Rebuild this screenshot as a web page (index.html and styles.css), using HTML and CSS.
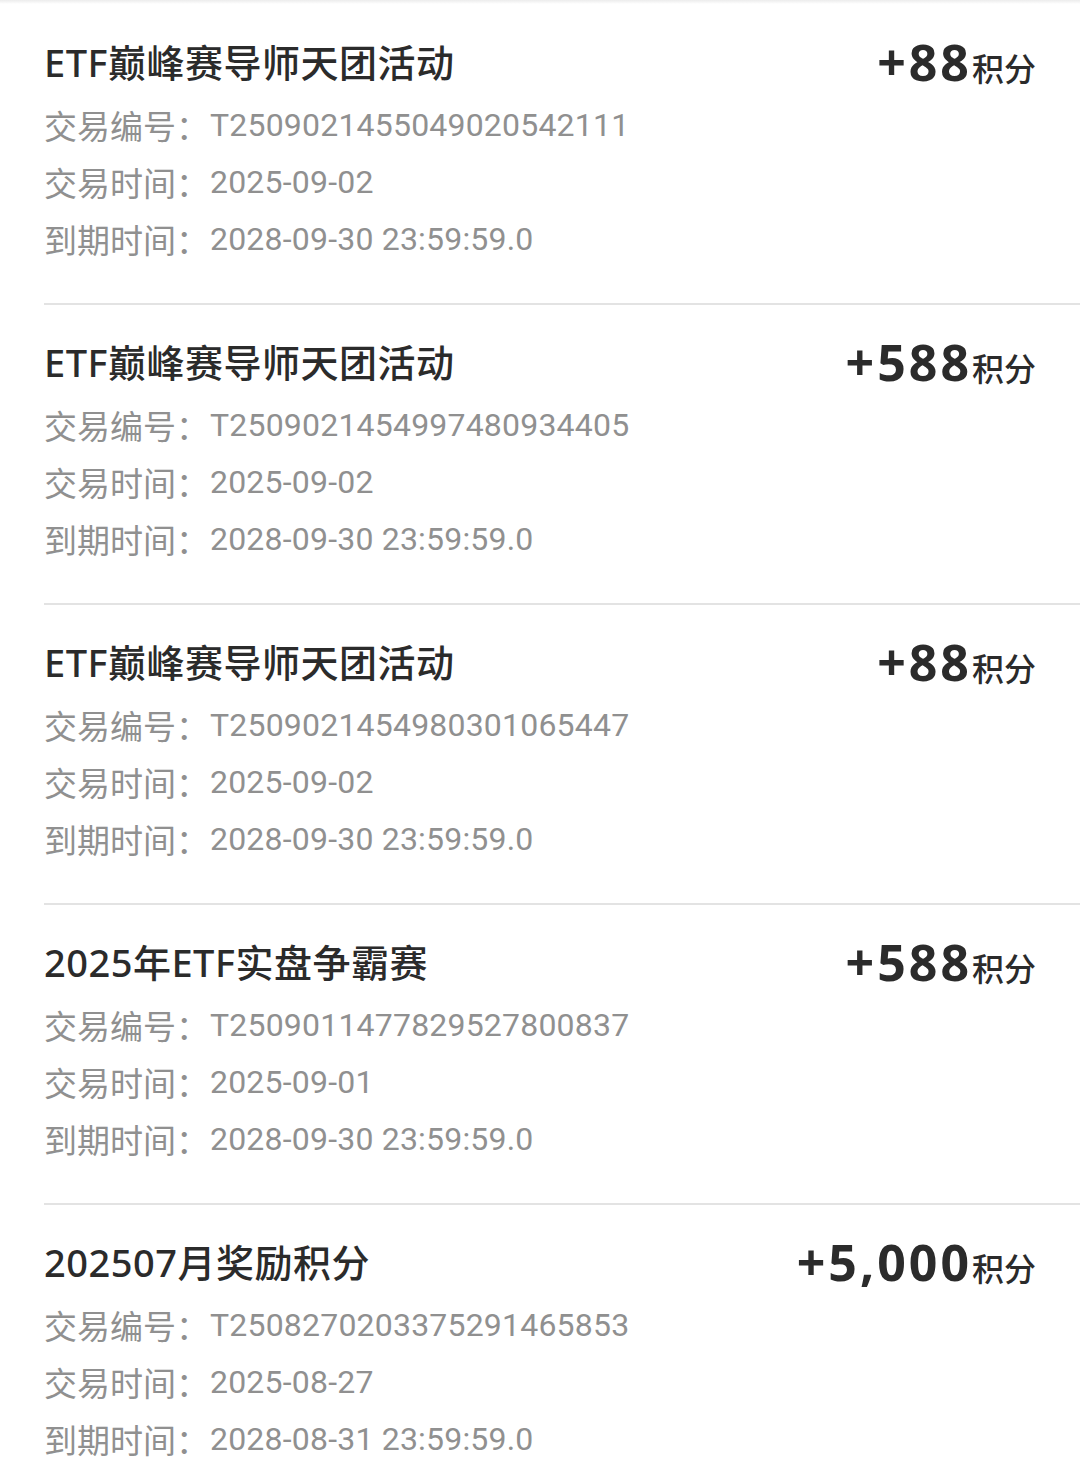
FILE: index.html
```html
<!DOCTYPE html>
<html lang="zh-CN">
<head>
<meta charset="UTF-8">
<title>积分明细</title>
<link rel="stylesheet" href="styles.css">
</head>
<body>
  <!-- points records -->
  <div class="record-list">

    <div class="record">
      <div class="record-head">
        <div class="record-title">ETF巅峰赛导师天团活动</div>
        <div class="record-amount">+88<span class="unit">积分</span></div>
      </div>
      <div class="record-line"><span class="label">交易编号：</span><span class="value">T2509021455049020542111</span></div>
      <div class="record-line"><span class="label">交易时间：</span><span class="value">2025-09-02</span></div>
      <div class="record-line"><span class="label">到期时间：</span><span class="value">2028-09-30 23:59:59.0</span></div>
    </div>

    <div class="record">
      <div class="record-head">
        <div class="record-title">ETF巅峰赛导师天团活动</div>
        <div class="record-amount">+588<span class="unit">积分</span></div>
      </div>
      <div class="record-line"><span class="label">交易编号：</span><span class="value">T2509021454997480934405</span></div>
      <div class="record-line"><span class="label">交易时间：</span><span class="value">2025-09-02</span></div>
      <div class="record-line"><span class="label">到期时间：</span><span class="value">2028-09-30 23:59:59.0</span></div>
    </div>

    <div class="record">
      <div class="record-head">
        <div class="record-title">ETF巅峰赛导师天团活动</div>
        <div class="record-amount">+88<span class="unit">积分</span></div>
      </div>
      <div class="record-line"><span class="label">交易编号：</span><span class="value">T2509021454980301065447</span></div>
      <div class="record-line"><span class="label">交易时间：</span><span class="value">2025-09-02</span></div>
      <div class="record-line"><span class="label">到期时间：</span><span class="value">2028-09-30 23:59:59.0</span></div>
    </div>

    <div class="record">
      <div class="record-head">
        <div class="record-title">2025年ETF实盘争霸赛</div>
        <div class="record-amount">+588<span class="unit">积分</span></div>
      </div>
      <div class="record-line"><span class="label">交易编号：</span><span class="value">T2509011477829527800837</span></div>
      <div class="record-line"><span class="label">交易时间：</span><span class="value">2025-09-01</span></div>
      <div class="record-line"><span class="label">到期时间：</span><span class="value">2028-09-30 23:59:59.0</span></div>
    </div>

    <div class="record">
      <div class="record-head">
        <div class="record-title">202507月奖励积分</div>
        <div class="record-amount">+5,000<span class="unit">积分</span></div>
      </div>
      <div class="record-line"><span class="label">交易编号：</span><span class="value">T2508270203375291465853</span></div>
      <div class="record-line"><span class="label">交易时间：</span><span class="value">2025-08-27</span></div>
      <div class="record-line"><span class="label">到期时间：</span><span class="value">2028-08-31 23:59:59.0</span></div>
    </div>

  </div>
</body>
</html>
```

FILE: styles.css
```css
body{
  margin:0;
  padding:0;
  background:#fff;
  font-family:'Noto Sans','Noto Sans CJK SC',sans-serif;
  color:#333;
}
/* faint shadow under the header that sits above this list */
.record-list{
  padding-top:5px;
  background:linear-gradient(#ececec,#fff 4px) no-repeat;
}
.record{
  margin-left:44px;
  padding:28px 44px 35px 0;
  height:235px;
  border-bottom:2px solid #e3e3e3;
}
.record-head{
  display:flex;
  justify-content:space-between;
  align-items:flex-start;
  height:64px;
}
.record-title{
  font-family:'Noto Sans','Noto Sans CJK SC',sans-serif;
  font-size:38px;
  font-weight:500;
  line-height:58px;
  letter-spacing:0.5px;
  color:#2b2b2b;
}
.record-amount{
  font-family:'Noto Sans','Noto Sans CJK SC',sans-serif;
  font-size:50px;
  font-weight:700;
  line-height:58px;
  letter-spacing:3px;
  color:#2b2b2b;
}
.record-amount .unit{
  font-family:'Noto Sans CJK SC',sans-serif;
  font-size:32px;
  font-weight:500;
  letter-spacing:0;
}
.record-line{
  display:flex;
  line-height:57px;
  height:57px;
  font-size:32px;
  color:#909090;
}
.record-line .label{
  font-family:'Noto Sans CJK SC',sans-serif;
  width:166px;
  font-size:33px;
}
.record-line .value{
  font-family:Roboto,'Noto Sans',sans-serif;
  letter-spacing:0.2px;
}
```
